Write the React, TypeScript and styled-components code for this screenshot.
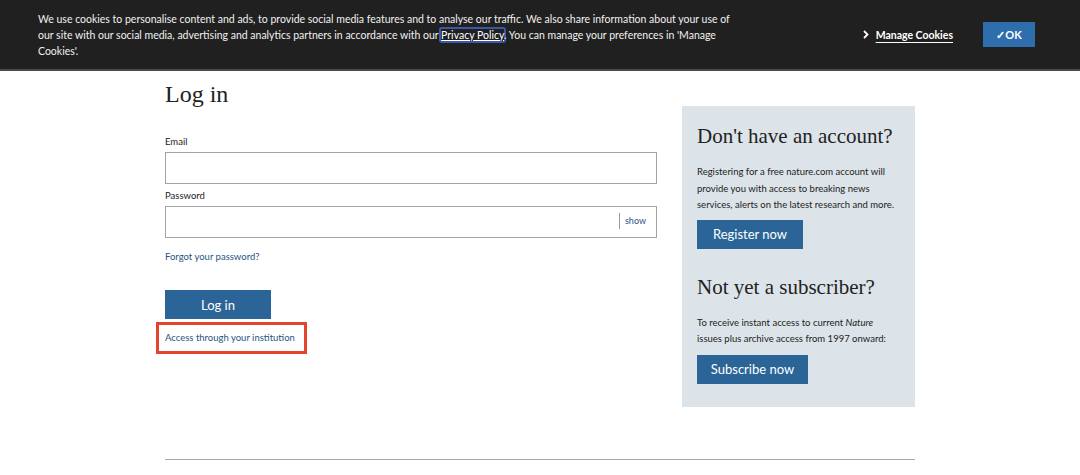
import React from 'react';
import styled, { createGlobalStyle } from 'styled-components';

const GlobalStyle = createGlobalStyle`
  html, body {
    margin: 0;
    padding: 0;
    background: #ffffff;
  }
  body {
    font-family: Lato, "Liberation Sans", sans-serif;
    color: #222222;
  }
`;

const sans = `Lato, "Liberation Sans", sans-serif`;
const serif = `"Liberation Serif", "DejaVu Serif", serif`;
const blue = '#2b6597';
const linkBlue = '#1f5584';

// Cookie banner
const Banner = styled.div`
  display: flex;
  align-items: center;
  height: 69px;
  padding: 0 45px 0 38px;
  background: #202020;
  border-bottom: 2px solid #4a4a4a;
`;

const BannerText = styled.p`
  width: 700px;
  margin: 0;
  font-family: ${sans};
  font-size: 10.5px;
  line-height: 16px;
  color: #f0f0f0;
`;

const PolicyLink = styled.a`
  color: #ffffff;
  text-decoration: underline;
  box-shadow: 0 0 0 2px #3a58a6;
  border-radius: 1px;
`;

const BannerActions = styled.div`
  display: flex;
  align-items: center;
  margin-left: auto;
  gap: 30px;
`;

const ManageLink = styled.a`
  display: flex;
  align-items: center;
  gap: 7px;
  color: #ffffff;
  font-family: ${sans};
  font-weight: 700;
  font-size: 10.5px;
  span {
    text-decoration: underline;
    text-underline-offset: 3px;
  }
`;

const OkButton = styled.button`
  width: 52px;
  height: 25px;
  border: none;
  background: #2f6eac;
  color: #ffffff;
  font-family: ${sans};
  font-weight: 700;
  font-size: 11px;
  padding: 0;
`;

// Main content
const Main = styled.main`
  width: 750px;
  margin: 0 auto;
  padding-top: 8px;
`;

const Columns = styled.div`
  display: flex;
  gap: 25px;
  align-items: flex-start;
`;

const LeftColumn = styled.div`
  width: 492px;
  display: flex;
  flex-direction: column;
  align-items: flex-start;
`;

const Title = styled.h1`
  margin: 0 0 26px;
  font-family: ${serif};
  font-weight: 400;
  font-size: 24px;
  line-height: 30px;
  color: #222222;
`;

const Label = styled.label`
  display: block;
  font-family: ${sans};
  font-size: 9.5px;
  line-height: 14px;
  color: #222222;
  margin-bottom: 3px;
`;

const Field = styled.div<{ $gap?: number }>`
  position: relative;
  width: 492px;
  height: 32px;
  box-sizing: border-box;
  border: 1px solid #a3a3a3;
  background: #ffffff;
  margin-bottom: ${p => p.$gap ?? 0}px;
`;

const ShowToggle = styled.span`
  position: absolute;
  right: 10px;
  top: 6px;
  height: 16px;
  padding-left: 5px;
  border-left: 1px solid #999999;
  font-family: ${sans};
  font-size: 9px;
  line-height: 16px;
  color: ${linkBlue};
`;

const TextLink = styled.a`
  font-family: ${sans};
  font-size: 9.5px;
  line-height: 14px;
  color: ${linkBlue};
  text-decoration: none;
`;

const PrimaryButton = styled.button<{ $width: number }>`
  width: ${p => p.$width}px;
  height: 29px;
  border: none;
  background: ${blue};
  color: #ffffff;
  font-family: ${sans};
  font-size: 13px;
  padding: 0;
`;

const ForgotRow = styled.div`
  font-size: 9.5px;
  line-height: 14px;
  margin-top: 12px;
  margin-bottom: 26px;
`;

const Highlight = styled.div`
  margin: 3px 0 0 -9px;
  width: 151px;
  height: 32px;
  box-sizing: border-box;
  border: 3px solid #e5432b;
  padding-left: 6px;
  display: flex;
  align-items: center;
`;

const SidePanel = styled.aside`
  width: 233px;
  box-sizing: border-box;
  margin-top: 27px;
  padding: 17px 15px 23px;
  background: #dce4e9;
`;

const PanelTitle = styled.h2<{ $top?: number }>`
  margin: ${p => p.$top ?? 0}px 0 15px;
  font-family: ${serif};
  font-weight: 400;
  font-size: 21px;
  line-height: 26px;
  color: #222222;
`;

const PanelText = styled.p<{ $bottom?: number }>`
  margin: 0 0 ${p => p.$bottom ?? 6}px;
  font-family: ${sans};
  font-size: 9.5px;
  line-height: 16.5px;
  color: #222222;
`;

const Rule = styled.hr`
  margin: 52px 0 0;
  border: none;
  border-top: 1px solid #aaaaaa;
`;

const Chevron = () => (
  <svg width="6" height="9" viewBox="0 0 6 9">
    <path d="M1 1l3.5 3.5L1 8" fill="none" stroke="#ffffff" strokeWidth="1.8" />
  </svg>
);

const App: React.FC = () => {
  return (
    <>
      <GlobalStyle />
      <Banner>
        <BannerText>
          We use cookies to personalise content and ads, to provide social media features and to analyse our traffic. We also share information about your use of our site with our social media, advertising and analytics partners in accordance with our <PolicyLink>Privacy Policy</PolicyLink>. You can manage your preferences in 'Manage Cookies'.
        </BannerText>
        <BannerActions>
          <ManageLink>
            <Chevron />
            <span>Manage Cookies</span>
          </ManageLink>
          <OkButton>✓OK</OkButton>
        </BannerActions>
      </Banner>

      <Main>
        <Columns>
          <LeftColumn>
            <Title>Log in</Title>
            <Label>Email</Label>
            <Field $gap={5} />
            <Label>Password</Label>
            <Field>
              <ShowToggle>show</ShowToggle>
            </Field>
            <ForgotRow>
              <TextLink>Forgot your password?</TextLink>
            </ForgotRow>
            <PrimaryButton $width={106}>Log in</PrimaryButton>
            <Highlight>
              <TextLink>Access through your institution</TextLink>
            </Highlight>
          </LeftColumn>

          <SidePanel>
            <PanelTitle>Don't have an account?</PanelTitle>
            <PanelText>
              Registering for a free nature.com account will provide you with access to breaking news services, alerts on the latest research and more.
            </PanelText>
            <PrimaryButton $width={106}>Register now</PrimaryButton>
            <PanelTitle $top={25}>Not yet a subscriber?</PanelTitle>
            <PanelText $bottom={7}>
              To receive instant access to current <em>Nature</em> issues plus archive access from 1997 onward:
            </PanelText>
            <PrimaryButton $width={111}>Subscribe now</PrimaryButton>
          </SidePanel>
        </Columns>
        <Rule />
      </Main>
    </>
  );
};

export default App;
